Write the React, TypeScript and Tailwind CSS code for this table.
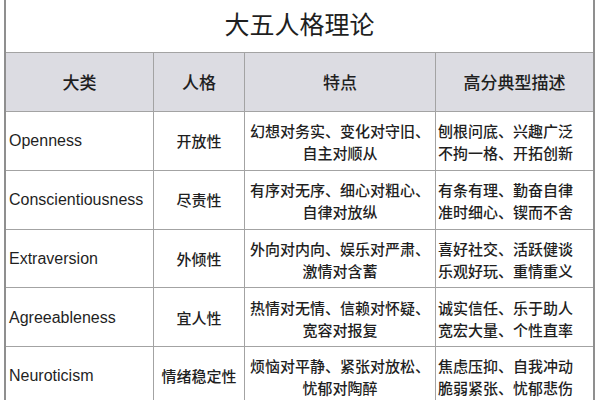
const rows = [
  {
    name: "Openness",
    trait: "开放性",
    features: ["幻想对务实、变化对守旧、", "自主对顺从"],
    desc: ["刨根问底、兴趣广泛", "不拘一格、开拓创新"],
  },
  {
    name: "Conscientiousness",
    trait: "尽责性",
    features: ["有序对无序、细心对粗心、", "自律对放纵"],
    desc: ["有条有理、勤奋自律", "准时细心、锲而不舍"],
  },
  {
    name: "Extraversion",
    trait: "外倾性",
    features: ["外向对内向、娱乐对严肃、", "激情对含蓄"],
    desc: ["喜好社交、活跃健谈", "乐观好玩、重情重义"],
  },
  {
    name: "Agreeableness",
    trait: "宜人性",
    features: ["热情对无情、信赖对怀疑、", "宽容对报复"],
    desc: ["诚实信任、乐于助人", "宽宏大量、个性直率"],
  },
  {
    name: "Neuroticism",
    trait: "情绪稳定性",
    features: ["烦恼对平静、紧张对放松、", "忧郁对陶醉"],
    desc: ["焦虑压抑、自我冲动", "脆弱紧张、忧郁悲伤"],
  },
];

const cjk = "font-['Noto_Sans_CJK_SC',sans-serif]";

export default function App() {
  return (
    <div className="w-[600px] h-[400px] overflow-hidden bg-white pl-[4px] pr-[5px]">
      <div className={`h-full border-l-2 border-r-2 border-[#8f8f8f] text-[#1f1f1f] ${cjk}`}>
        {/* Title */}
        <div className="h-[52px] flex items-center justify-center text-[25px] font-normal pb-[4px]">
          大五人格理论
        </div>

        {/* Header */}
        <div className="grid grid-cols-[147px_91px_191px_1fr] h-[59px] border-t border-[#a3a3a3] bg-[#dcdce2] text-[17px] font-medium">
          <div className="flex items-center justify-center">大类</div>
          <div className="flex items-center justify-center border-l border-[#a3a3a3]">人格</div>
          <div className="flex items-center justify-center border-l border-[#a3a3a3]">特点</div>
          <div className="flex items-center justify-center border-l border-[#a3a3a3]">高分典型描述</div>
        </div>

        {/* Body */}
        {rows.map((row) => (
          <div
            key={row.name}
            className="grid grid-cols-[147px_91px_191px_1fr] h-[58.75px] border-t border-[#a3a3a3] text-[15px] leading-[22px] font-medium"
          >
            <div className="flex items-center pl-[3px] pt-[1px] text-[16px] font-normal font-['Liberation_Sans',sans-serif]">
              {row.name}
            </div>
            <div className="flex items-center justify-center border-l border-[#a3a3a3] pt-[1px]">
              {row.trait}
            </div>
            <div className="flex flex-col items-center justify-center border-l border-[#a3a3a3] pt-[3px]">
              {row.features.map((f) => (
                <div key={f}>{f}</div>
              ))}
            </div>
            <div className="flex flex-col justify-center border-l border-[#a3a3a3] pl-[2px] pt-[3px]">
              {row.desc.map((d) => (
                <div key={d}>{d}</div>
              ))}
            </div>
          </div>
        ))}
      </div>
    </div>
  );
}
